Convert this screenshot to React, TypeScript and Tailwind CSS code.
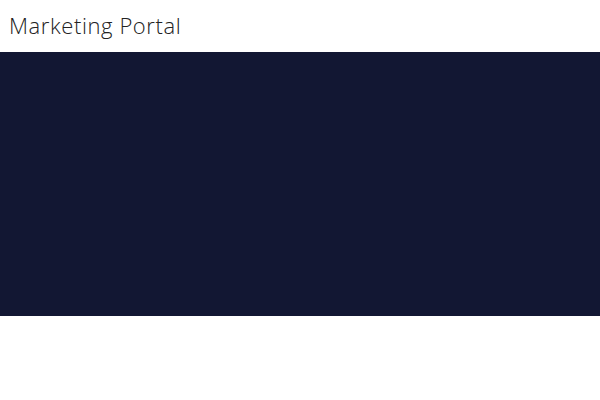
export default function App() {
  return (
    <div className="min-h-screen bg-white">
      <header className="flex h-[52px] items-center px-[9px] pb-[1px]">
        <h1 className="font-['Open_Sans',sans-serif] text-[22px] font-light tracking-[0.6px] text-[#222]">
          Marketing Portal
        </h1>
      </header>
      <section className="h-[264px] bg-[#121733]" />
    </div>
  );
}
